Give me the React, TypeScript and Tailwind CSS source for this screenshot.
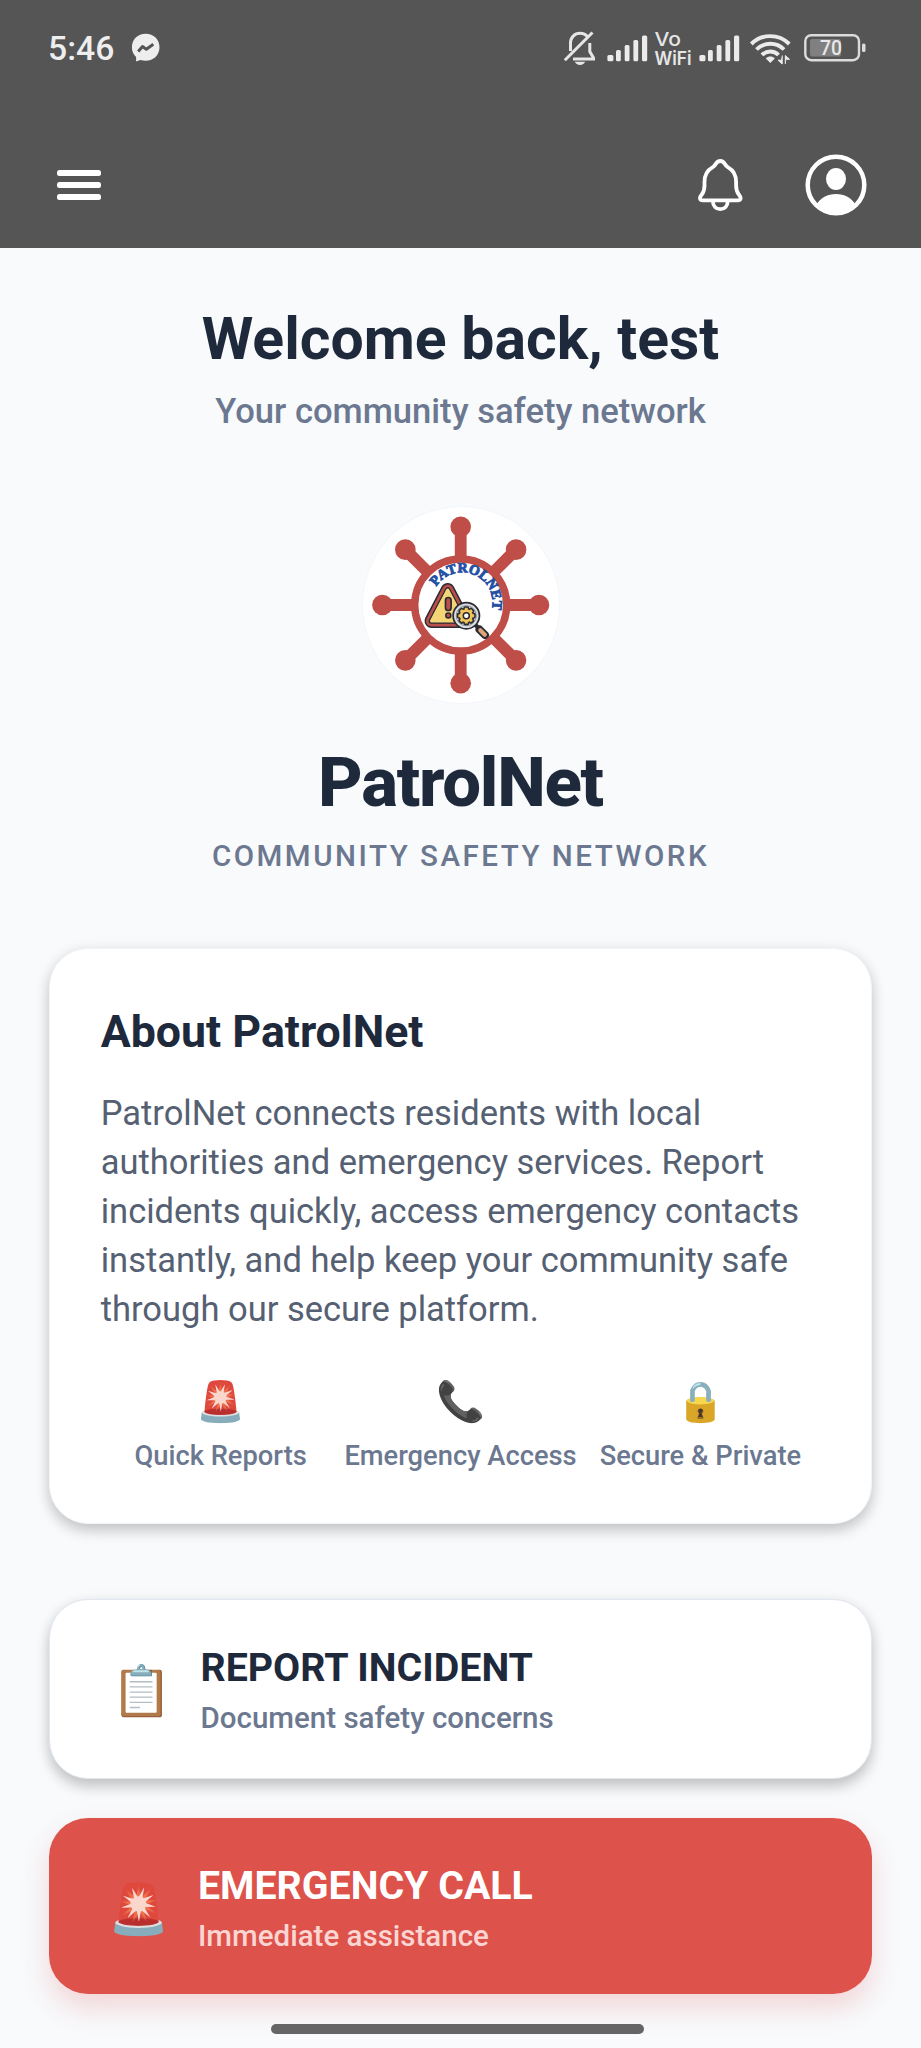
const BARS = [
  [608.4, 55, 6],
  [617, 50, 4.8],
  [625.7, 45, 4.8],
  [634.4, 40, 4.8],
  [643, 35.6, 5.2],
];

function MessengerIcon() {
  return (
    <svg className="h-10 w-10" viewBox="126 28 40 40" aria-hidden="true">
      <path
        d="M145.7 33.8c-7.9 0-13.8 5.8-13.8 13.4 0 4 1.6 7.4 4.2 9.8v4.6l4.3-1.6c1.7.5 3.5.8 5.3.8 7.9 0 13.8-6 13.8-13.6s-5.9-13.4-13.8-13.4z"
        fill="#eeeeee"
      />
      <path d="M138.2 51.5l4.300-5 3.800 2.700 7-5" fill="none" stroke="#555555" strokeWidth="3" strokeLinejoin="round" />
    </svg>
  );
}

function MutedBellIcon() {
  return (
    <svg className="h-10 w-10" viewBox="562 28 40 40" aria-hidden="true">
      <g fill="none" stroke="#e6e6e6" strokeWidth="3">
        <path d="M571.5 51V43c0-5.5 4-9.7 9.5-9.7 3.2 0 5.8 1.2 7.5 3.5" />
        <path d="M590.8 43v8.5l3.7 6.5v1H574" />
        <path d="M565.8 60.3L593.5 32.500" />
      </g>
      <path d="M575.8 61.8h10.4c-.8 2-2.7 3.2-5.2 3.2s-4.4-1.2-5.200-3.200z" fill="#e6e6e6" />
    </svg>
  );
}

function SignalIcon() {
  return (
    <svg className="h-10 w-[50px]" viewBox="604 28 50 40" fill="#ebebeb" aria-hidden="true">
      {BARS.map(([x, y, w]) => (
        <rect key={x} x={x} y={y} width={w} height={61.3 - y} rx="1.5" />
      ))}
    </svg>
  );
}

function WifiIcon() {
  return (
    <svg className="h-10 w-12" viewBox="747 28 48 40" aria-hidden="true">
      <g fill="none" stroke="#ebebeb" strokeWidth="3.9">
        <path d="M752.3 44c10.5-10.5 27.5-10.5 38 0" />
        <path d="M757.5 49.5c7.5-7.6 20-7.6 27.5 0" />
        <path d="M763 55c4.5-4.600 12-4.600 16.500 0" />
      </g>
      <path d="M766.8 58.5c2.5-2.600 6.500-2.600 9 0l-4.500 4.500z" fill="#ebebeb" />
      <path d="M783.2 55.5v8.5l-4.2-3.8h3M786.3 64v-8.5l4.2 3.8h-3" fill="#ebebeb" stroke="#ebebeb" strokeWidth="1" />
    </svg>
  );
}

function BatteryIcon() {
  return (
    <svg className="h-10 w-[68px]" viewBox="801 28 68 40" aria-hidden="true">
      <rect x="806.3" y="35.2" width="53.7" height="25" rx="6" fill="none" stroke="#dcdcdc" strokeWidth="2.4" />
      <rect x="811" y="39" width="31" height="17.5" rx="2.5" fill="#808080" />
      <rect x="863" y="43.5" width="3.5" height="8.5" rx="1.5" fill="#dcdcdc" />
      <text x="821" y="55.2" textLength="22" lengthAdjust="spacingAndGlyphs" fill="#e8e8e8" className="font-['Roboto',sans-serif] text-[20.5px] font-medium">
        70
      </text>
    </svg>
  );
}

function BellIcon() {
  return (
    <svg className="h-[60px] w-[52px]" viewBox="694 155 52 60" fill="none" stroke="#ffffff" strokeWidth="3.8" strokeLinejoin="round" aria-hidden="true">
      <path d="M720.3 161c-2.4 0-3.6 1.3-4.6 3-.9 1.7-1.7 2.6-3.2 3.4-5.7 3.1-8 8-8 14.6v3.5c0 4.5-.7 6.5-2.7 9-1.3 1.6-1.8 2.3-1.8 3.6 0 1.4.8 2.2 2.2 2.2h36.2c1.4 0 2.2-.8 2.2-2.2 0-1.3-.5-2-1.8-3.6-2-2.5-2.7-4.5-2.7-9V182c0-6.6-2.3-11.5-8-14.6-1.5-.8-2.3-1.7-3.2-3.4-1-1.7-2.2-3-4.6-3z" />
      <path d="M712.8 201c.2 4.9 3.2 8.2 7.5 8.2s7.3-3.3 7.5-8.2" />
    </svg>
  );
}

function AccountIcon() {
  return (
    <svg className="size-16" viewBox="803.7 153 64 64" aria-hidden="true">
      <circle cx="835.7" cy="185" r="28.3" fill="none" stroke="#ffffff" strokeWidth="4.5" />
      <ellipse cx="835.7" cy="179" rx="10" ry="11" fill="#ffffff" />
      <path d="M815.8 205c4.5-7.2 11.5-11 19.9-11s15.4 3.8 19.9 11a28.3 28.3 0 0 1-39.8 0z" fill="#ffffff" />
    </svg>
  );
}

const ANGLES = [0, 45, 90, 135, 180, 225, 270, 315];
const TEETH = [0, 45, 90, 135];

function Logo() {
  return (
    <svg className="size-full" viewBox="13 12 196 196" aria-hidden="true">
      <g fill="#bf4d48" stroke="#bf4d48">
        {ANGLES.map((a) => (
          <g key={a} transform={`rotate(${a} 110.7 110)`}>
            <path d="M110.7 65V34" strokeWidth="11.8" />
            <circle cx="110.7" cy="31.7" r="10.3" stroke="none" />
          </g>
        ))}
      </g>
      <circle cx="110.7" cy="110" r="46" fill="#ffffff" stroke="#bf4d48" strokeWidth="7.4" />
      <path id="logo-arc" d="M86.3 91.5A30.5 30.5 0 0 1 138.8 122.5" fill="none" />
      <text fill="#2450a4" className="font-['Liberation_Serif',serif] text-[14px] font-bold" stroke="#2450a4" strokeWidth="0.9">
        <textPath href="#logo-arc" textLength="85">
          PATROLNET
        </textPath>
      </text>
      <g strokeLinejoin="round">
        <path d="M97.7 95L81.5 126H114z" fill="#2b2a33" stroke="#2b2a33" strokeWidth="14" />
        <path d="M97.7 95L81.5 126H114z" fill="#b84f4b" stroke="#b84f4b" strokeWidth="11" />
        <path d="M97.7 95L81.5 126H114z" fill="#2b2a33" stroke="#2b2a33" strokeWidth="5.5" />
        <path d="M97.7 95L81.5 126H114z" fill="#f3d577" stroke="#f3d577" strokeWidth="3" />
      </g>
      <rect x="95.5" y="102.5" width="5.6" height="13" rx="2.8" fill="#b84f4b" stroke="#2b2a33" strokeWidth="1.7" />
      <circle cx="98.3" cy="120.6" r="2.5" fill="#b84f4b" stroke="#2b2a33" strokeWidth="1.5" />
      <g strokeLinecap="round">
        <path d="M125 129.5l10.5 10.5" stroke="#2b2a33" strokeWidth="4" />
        <path d="M129.5 134.5l5.5 5.5" stroke="#2b2a33" strokeWidth="8" />
        <path d="M130.3 135.3l4.500 4.500" stroke="#dda679" strokeWidth="4.200" />
      </g>
      <circle cx="116.3" cy="120.7" r="14" fill="#2b2a33" />
      <circle cx="116.3" cy="120.7" r="12.3" fill="#d9dde2" />
      <circle cx="116.3" cy="120.7" r="10" fill="#eef0f2" stroke="#6b6e76" strokeWidth="0.8" />
      {TEETH.map((a) => (
        <rect key={a} x="114" y="112" width="4.6" height="17.4" rx="1.2" fill="#efc458" stroke="#2b2a33" strokeWidth="1.6" transform={`rotate(${a} 116.3 120.7)`} />
      ))}
      <circle cx="116.3" cy="120.7" r="6.5" fill="#efc458" />
      <circle cx="116.3" cy="120.7" r="3" fill="#ffffff" stroke="#2b2a33" strokeWidth="1.5" />
    </svg>
  );
}

function Feature({ icon, label }: { icon: string; label: string }) {
  return (
    <div className="flex w-60 flex-col items-center whitespace-nowrap">
      <span className="h-[50px] font-['Roboto','Noto_Color_Emoji',sans-serif] text-[39.3px] leading-[52px] saturate-[0.85]">{icon}</span>
      <span className="mt-[12.7px] text-[27.3px] leading-[34px] font-medium text-[#6b7890]">{label}</span>
    </div>
  );
}

export default function App() {
  return (
    <div className="relative flex h-[2048px] w-[921px] flex-col overflow-hidden bg-[#f8fafc] font-['Roboto',sans-serif]">
      <header className="h-[247.5px] shrink-0 bg-[#555555]">
        <div className="flex h-24 items-center justify-between pr-[53px] pl-12">
          <div className="flex items-center gap-3.5">
            <span className="w-16 pt-0.5 text-[33.7px] leading-10 font-medium text-[#eeeeee]">5:46</span>
            <MessengerIcon />
          </div>
          <div className="flex items-center">
            <MutedBellIcon />
            <span className="w-0.5" />
            <SignalIcon />
            <svg className="h-10 w-[42px]" viewBox="654 28 42 40" fill="#e6e6e6" aria-hidden="true">
              <text x="655.5" y="45.5" textLength="26.5" lengthAdjust="spacingAndGlyphs" className="font-['Inter',sans-serif] text-[19px] font-medium">Vo</text>
              <text x="655.5" y="64.5" textLength="37" lengthAdjust="spacingAndGlyphs" className="font-['Inter',sans-serif] text-[18.5px] font-semibold">WiFi</text>
            </svg>
            <SignalIcon />
            <span className="w-px" />
            <WifiIcon />
            <span className="w-1.5" />
            <BatteryIcon />
          </div>
        </div>
        <div className="mt-[57px] flex h-16 items-center justify-between pr-[53.3px] pl-[56.5px]">
          <div className="flex w-[44.5px] flex-col gap-[5.7px]">
            <span className="h-[6.3px] rounded-[2.5px] bg-white" />
            <span className="h-[6.3px] rounded-[2.5px] bg-white" />
            <span className="h-[6.3px] rounded-[2.5px] bg-white" />
          </div>
          <div className="flex items-center gap-[57.7px]">
            <BellIcon />
            <AccountIcon />
          </div>
        </div>
      </header>

      <main className="flex flex-col px-[49px] pt-[56.5px]">
        <div className="flex flex-col items-center">
          <h1 className="text-[58.95px] leading-[70px] font-bold whitespace-nowrap text-[#1e293b]">Welcome back, test</h1>
          <p className="mt-[15.5px] text-[34.6px] leading-[42px] font-medium whitespace-nowrap text-[#6b7890]">Your community safety network</p>
          <div className="mt-[75.5px] size-[196px] overflow-hidden rounded-full bg-white shadow-[0_0_0_1px_#f3f6fa]">
            <Logo />
          </div>
          <h2 className="mt-[39.5px] text-[69px] leading-[80px] font-extrabold tracking-[-1.28px] text-[#1e293b]">PatrolNet</h2>
          <p className="mt-[15.5px] text-[29.5px] leading-9 font-medium tracking-[2.52px] whitespace-nowrap text-[#6b7890]">COMMUNITY SAFETY NETWORK</p>
        </div>

        <section className="mt-[74px] h-[576px] rounded-[39px] border border-[#f1f5f9] bg-white px-[50.7px] pt-[56px] shadow-[0_7px_14px_rgba(0,0,0,0.19),0_1px_16px_rgba(0,0,0,0.06)]">
          <h3 className="text-[44.7px] leading-[54px] font-bold text-[#1e293b]">About PatrolNet</h3>
          <p className="mt-[29.6px] text-[34.5px] leading-[49.15px] whitespace-nowrap text-[#556072]">
            PatrolNet connects residents with local
            <br />
            authorities and emergency services. Report
            <br />
            incidents quickly, access emergency contacts
            <br />
            instantly, and help keep your community safe
            <br />
            through our secure platform.
          </p>
          <div className="mt-[42px] flex">
            <Feature icon="🚨" label="Quick Reports" />
            <Feature icon="📞" label="Emergency Access" />
            <Feature icon="🔒" label="Secure & Private" />
          </div>
        </section>

        <button className="mt-[75px] flex h-[180px] items-center gap-[30px] rounded-[39px] border border-[#e2e8f0] bg-white pt-[3px] pl-[60.5px] text-left shadow-[0_8px_14px_rgba(0,0,0,0.2),0_1px_14px_rgba(0,0,0,0.06)]">
          <span className="w-[60px] text-center text-[49.1px] leading-[60px] saturate-[0.85]">📋</span>
          <span className="flex flex-col">
            <span className="text-[39.3px] leading-[46px] font-bold text-[#1e293b]">REPORT INCIDENT</span>
            <span className="mt-[9.3px] text-[29.5px] leading-9 font-medium text-[#6b7890]">Document safety concerns</span>
          </span>
        </button>

        <button className="mt-[39px] flex h-[176px] items-center gap-[30px] rounded-[39px] bg-[#dd524b] pt-[5px] pl-[59px] text-left shadow-[0_14px_28px_rgba(220,70,70,0.2)]">
          <span className="w-[60px] text-center text-[49.1px] leading-[60px] saturate-[0.85]">🚨</span>
          <span className="flex flex-col">
            <span className="text-[39.3px] leading-[46px] font-bold text-white">EMERGENCY CALL</span>
            <span className="mt-[9.3px] text-[29.5px] leading-9 font-medium text-[#fad5d1]">Immediate assistance</span>
          </span>
        </button>
      </main>

      <div className="absolute bottom-[14.5px] left-[271px] h-[9.5px] w-[373px] rounded-full bg-[#656565]" />
    </div>
  );
}
